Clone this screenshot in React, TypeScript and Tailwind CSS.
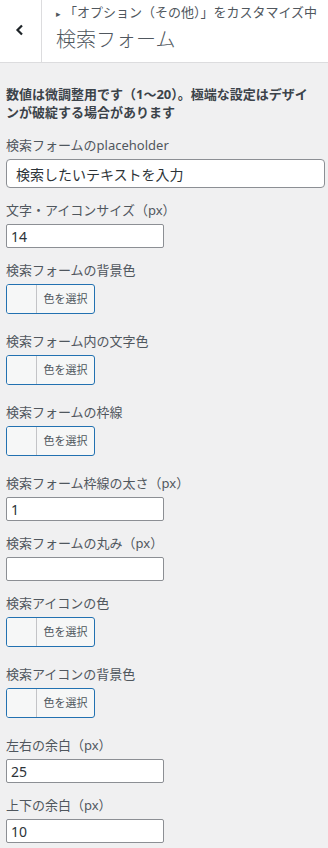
import React from 'react';

const font = { fontFamily: '"Noto Sans", "Noto Sans CJK JP", sans-serif' };

type Field =
  | { kind: 'number'; label: string; value: string }
  | { kind: 'color'; label: string };

const fields: Field[] = [
  { kind: 'number', label: '文字・アイコンサイズ（px）', value: '14' },
  { kind: 'color', label: '検索フォームの背景色' },
  { kind: 'color', label: '検索フォーム内の文字色' },
  { kind: 'color', label: '検索フォームの枠線' },
  { kind: 'number', label: '検索フォーム枠線の太さ（px）', value: '1' },
  { kind: 'number', label: '検索フォームの丸み（px）', value: '' },
  { kind: 'color', label: '検索アイコンの色' },
  { kind: 'color', label: '検索アイコンの背景色' },
  { kind: 'number', label: '左右の余白（px）', value: '25' },
  { kind: 'number', label: '上下の余白（px）', value: '10' },
];

function ColorButton() {
  return (
    <button
      type="button"
      className="flex h-[30px] w-[89px] items-stretch overflow-hidden rounded-[3px] border border-[#2271b1] bg-[#f6f7f7]"
    >
      <span className="w-[30px] border-r border-[#c3c4c7] bg-[#f6f7f7]" />
      <span className="flex flex-1 items-center justify-center text-[11px] text-[#50575e]">色を選択</span>
    </button>
  );
}

export default function App() {
  return (
    <div className="min-h-screen w-[328px] bg-[#f0f0f1] text-[#50575e]" style={font}>
      <div className="flex h-[63px] border-b border-[#dcdcde] bg-white">
        <div className="flex w-[42px] items-center justify-center border-r border-[#dcdcde]">
          <svg width="9" height="12" viewBox="0 0 9 12" className="-mt-[3px] mr-[2px]">
            <path d="M7 1.5 L2.5 6 L7 10.5" fill="none" stroke="#1d2327" strokeWidth="2.2" />
          </svg>
        </div>
        <div className="flex-1 pl-[14px] pt-[3px]">
          <div className="whitespace-nowrap text-[13px] leading-[18px] text-[#50575e]">
            <span className="mr-[3px] text-[9px]">▸</span>「オプション（その他）」をカスタマイズ中
          </div>
          <div className="mt-[4px] text-[20px] font-light leading-[26px] text-[#50575e]">検索フォーム</div>
        </div>
      </div>

      <div className="px-[6px] pt-[22px]">
        <p className="mr-[8px] text-[13px] font-bold leading-[18px] text-[#3c434a]">
          数値は微調整用です（1〜20）。極端な設定はデザインが破綻する場合があります
        </p>

        <div className="mt-[15px]">
          <label className="block text-[13px] leading-[18px]">検索フォームのplaceholder</label>
          <input
            type="text"
            readOnly
            value="検索したいテキストを入力"
            className="mt-[5px] block h-[29px] w-[319px] rounded-[4px] border border-[#8c8f94] bg-white px-[9px] text-[14px] text-[#2c3338] outline-none"
          />
        </div>

        {fields.map((f, i) => (
          <div key={i} className={f.kind === 'color' ? 'mt-[13px] pb-[5px]' : 'mt-[13px]'}>
            <label className="block text-[13px] leading-[18px]">{f.label}</label>
            <div className="mt-[5px]">
              {f.kind === 'color' ? (
                <ColorButton />
              ) : (
                <input
                  type="text"
                  readOnly
                  value={f.value}
                  className="block h-[24px] w-[158px] rounded-[2px] border border-[#8c8f94] bg-white px-[4px] text-[14px] text-[#2c3338] outline-none"
                />
              )}
            </div>
          </div>
        ))}
      </div>
    </div>
  );
}
